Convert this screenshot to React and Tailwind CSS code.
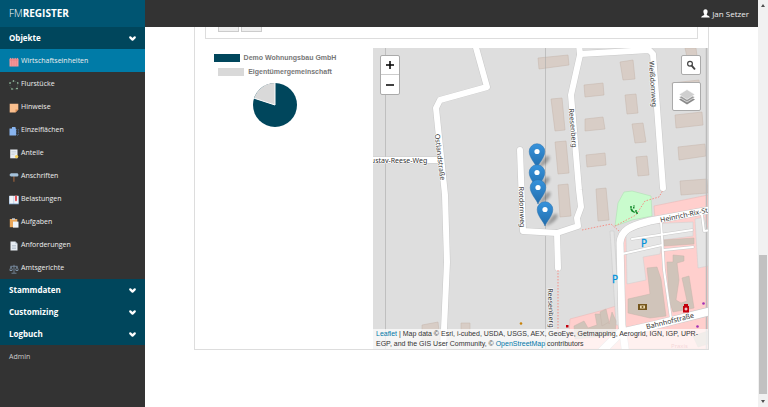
import { ChevronDown } from 'lucide-react';

const objects = [
  { label: 'Wirtschaftseinheiten', icon: FenceIcon, active: true },
  { label: 'Flurstücke', icon: ParcelIcon },
  { label: 'Hinweise', icon: NoteIcon },
  { label: 'Einzelflächen', icon: AreaIcon },
  { label: 'Anteile', icon: ShareIcon },
  { label: 'Anschriften', icon: SignIcon },
  { label: 'Belastungen', icon: BookIcon },
  { label: 'Aufgaben', icon: ClipboardIcon },
  { label: 'Anforderungen', icon: PageIcon },
  { label: 'Amtsgerichte', icon: ScaleIcon },
];

function Glyph({ children }) {
  return (
    <svg viewBox="0 0 10 10" className="w-[10px] h-[10px] shrink-0" aria-hidden="true">
      {children}
    </svg>
  );
}

function FenceIcon() {
  return (
    <Glyph>
      <path d="M.5 2 1.6.8 2.7 2 3.8.8 5 2 6.2.8 7.3 2 8.4.8 9.5 2V9.5H.5z" fill="#f3989b" />
      <path d="M2.7 1.5v8M5 1.5v8M7.3 1.5v8" stroke="#dd6a70" strokeWidth=".4" />
      <path d="M.5 3h9" stroke="#e8757c" strokeWidth=".6" />
    </Glyph>
  );
}

function ParcelIcon() {
  return (
    <Glyph>
      <path d="M1 3 4.5.8 9 2.7 8 8.8 3 9.3 1 6z" fill="none" stroke="#5f8b70" strokeWidth=".5" strokeDasharray="1 1" />
      <g fill="#a8d5b5">
        <circle cx="1" cy="3" r=".8" />
        <circle cx="4.5" cy="1" r=".8" />
        <circle cx="8.8" cy="3" r=".8" />
        <circle cx="8" cy="8.6" r=".8" />
        <circle cx="3" cy="9" r=".8" />
      </g>
    </Glyph>
  );
}

function NoteIcon() {
  return (
    <Glyph>
      <path d="M.7.8h8.6v5.8L6.5 9.4H.7z" fill="#fabf8e" />
      <path d="M9.3 6.6H6.5v2.8z" fill="#d98d55" />
    </Glyph>
  );
}

function AreaIcon() {
  return (
    <Glyph>
      <path d="M.5 2.5H3V1h3.5v1.5H7v7H.5z" fill="#88b4ef" />
      <path d="M7.4 3v6.2h2V3" fill="none" stroke="#5c80ad" strokeWidth=".7" strokeDasharray="1 .7" />
    </Glyph>
  );
}

function ShareIcon() {
  return (
    <Glyph>
      <path d="M1.2.5h7.3v8.8H1.2z" fill="#e8edf2" />
      <path d="M2.5 2.5h4.7M2.5 4h4.7M2.5 5.5h3" stroke="#b6c2cf" strokeWidth=".5" />
      <circle cx="7.6" cy="7.6" r="1.7" fill="#f4cf5a" />
    </Glyph>
  );
}

function SignIcon() {
  return (
    <Glyph>
      <path d="M4.2 3h1.4v6.7H4.2z" fill="#8a5a3b" />
      <path d="M.4 3 1.8 1.2h6.8L9.6 3 8.6 4.6H1.8z" fill="#a4c1da" />
    </Glyph>
  );
}

function BookIcon() {
  return (
    <Glyph>
      <path d="M0 1h9.8v8.3H0z" fill="#7ea4cf" />
      <path d="M.4.8h4.3v7.7H.4zM5.1.8h4.3v7.7H5.1z" fill="#f1f5fa" />
      <path d="M6 .8h2v5.8l-1-1-1 1z" fill="#e35157" />
    </Glyph>
  );
}

function ClipboardIcon() {
  return (
    <Glyph>
      <path d="M.8 1h7.5v8.2H.8z" fill="#e9a75b" />
      <path d="M3 .3h3v1.6H3z" fill="#c9ced4" />
      <path d="M4 3.6h5.5v6H4z" fill="#eef4fa" />
    </Glyph>
  );
}

function PageIcon() {
  return (
    <Glyph>
      <path d="M1.5.6h4.8l2.2 2.2v6.8h-7z" fill="#e6ecf2" />
      <path d="M6.3.6v2.2h2.2" fill="#b4c0cd" />
      <path d="M3 4.5h4M3 6h4M3 7.5h4" stroke="#9ba9b8" strokeWidth=".5" />
    </Glyph>
  );
}

function ScaleIcon() {
  return (
    <Glyph>
      <g fill="none" stroke="#7d93a8" strokeWidth=".8">
        <path d="M5 .8v8M2.5 9.2h5M1.5 2.3h7M2 2.5.8 6M2 2.5 3.4 6M8 2.5 6.6 6M8 2.5 9.3 6" />
      </g>
      <path d="M.4 6h3.2L2.9 7H1zM6.3 6h3.2l-.7 1H7z" fill="#7d93a8" />
    </Glyph>
  );
}

function Section({ label }) {
  return (
    <button className="w-full h-[22px] bg-[#00465c] flex items-center justify-between pl-[9px] pr-2 text-[8px] font-bold text-white">
      {label}
      <ChevronDown className="w-[9px] h-[9px]" strokeWidth={6} />
    </button>
  );
}

function Sidebar() {
  return (
    <nav className="w-[145px] shrink-0 bg-[#333333] text-[#eeeeee] text-[7px]">
      <a href="#" className="h-[27px] bg-[#005572] flex items-center pl-[9px] text-[10px] text-white">
        <span className="font-light">FM</span>
        <span className="font-bold">REGISTER</span>
      </a>
      <Section label="Objekte" />
      {objects.map(({ label, icon: Icon, active }) => (
        <a
          key={label}
          href="#"
          className={`h-[23px] flex items-center gap-[2px] pl-[9px] pt-[2px] ${active ? 'bg-[#007ba7]' : ''}`}
        >
          <Icon />
          {label}
        </a>
      ))}
      <Section label="Stammdaten" />
      <Section label="Customizing" />
      <Section label="Logbuch" />
      <a href="#" className="h-[23px] flex items-center pl-[9px] pt-[2px] text-[#cccccc]">Admin</a>
    </nav>
  );
}

function OwnerChart() {
  return (
    <div className="w-[168px] shrink-0 pt-[3px] pr-7 flex flex-col items-center text-[7px] leading-[14px] font-bold text-[#777777] font-['Liberation_Sans',sans-serif]">
      <div className="flex items-center gap-1">
        <span className="w-[26px] h-2 bg-[#00465c]" />
        Demo Wohnungsbau GmbH
      </div>
      <div className="flex items-center gap-1">
        <span className="w-[26px] h-2 bg-[#d9d9d9]" />
        Eigentümergemeinschaft
      </div>
      <svg viewBox="-22 -22 44 44" className="w-11 h-11 mt-1" role="img" aria-label="Anteile">
        <circle r="22" fill="#00465c" />
        <path d="M0 0V-22A22 22 0 0 0-20.9-6.8z" fill="#d9d9d9" />
        <path d="M0-22V0L-20.9-6.8" fill="none" stroke="#fff" />
      </svg>
    </div>
  );
}

const pins = [
  [537, 168],
  [537, 189],
  [538, 204],
  [545, 226],
];

const roads = [
  'M475 44 487 87 440 100 436 108 445 195 447 262 443 352',
  'M370 160H440',
  'M520 150 523 231 557 233 578 226 577 218 581 207 579 190 571 95 580 55 579 44',
  'M557 233 558 268',
  'M580 54 649 50 653 54 663 188',
];

const houses = [
  '538,58 568,55 569,65 539,69',
  '551,99 562,98 565,130 555,131',
  '555,142 566,141 569,173 558,174',
  '558,185 568,184 571,216 560,217',
  '584,85 603,83 604,95 585,97',
  '585,119 603,117 605,129 585,131',
  '586,155 605,153 606,165 587,167',
  '596,189 606,188 609,220 598,221',
  '620,62 633,60 635,79 623,80',
  '625,95 636,94 638,113 627,114',
  '632,124 643,123 646,142 635,143',
  '636,157 647,156 649,175 638,176',
  '685,48 696,48 697,56 687,57',
  '672,83 699,80 700,90 673,93',
  '675,115 702,112 703,125 676,128',
  '678,147 705,144 706,156 679,160',
  '680,181 707,179 708,193 681,195',
  '422,325 438,322 440,340 422,340',
  '461,323 470,323 470,335 461,335',
];

const townHouses = [
  '628,299 650,294 647,268 657,267 661,279 666,316 650,318 628,313',
  '667,262 673,262 673,255 684,256 684,261 677,263 679,280 676,300 681,303 687,301 682,278 689,276 694,308 673,312 669,300',
  '664,240 694,238 694,244 664,246',
  '574,326 584,321 588,328 597,325 595,314 605,314 609,324 612,312 616,321 615,335 575,339',
  '600,312 606,309 609,322 602,326',
  '693,336 708,331 708,344 698,347',
];

function Label({ x, y, turn, children }) {
  return (
    <text
      transform={`translate(${x} ${y}) rotate(${turn})`}
      className="text-[7px]"
      fill="#333"
      stroke="#fff"
      strokeWidth="1"
      paintOrder="stroke"
      textAnchor="middle"
      dominantBaseline="central"
    >
      {children}
    </text>
  );
}

function StreetMap() {
  return (
    <svg viewBox="373 48 335 301" preserveAspectRatio="xMidYMid slice" className="w-full h-full font-['Noto_Sans',sans-serif]">
      <defs>
        <linearGradient id="pin" x1="0" y1="0" x2="0" y2="1">
          <stop offset="0" stopColor="#3793dc" />
          <stop offset="1" stopColor="#226dac" />
        </linearGradient>
        <filter id="soft" x="-50%" y="-50%" width="200%" height="200%">
          <feGaussianBlur stdDeviation="1.5" />
        </filter>
      </defs>
      <rect x="373" y="48" width="335" height="301" fill="#dedede" />

      {/* town centre */}
      <path d="M654 206 708 195V349H568L570 319 600 311 616 306 623 236 655 218z" fill="#ffcfcd" stroke="#e8b4b2" strokeWidth=".5" />
      <path d="M626 234 646 224 693 222V236L662 240 660 254 643 257 646 280 627 284z" fill="#e5e5e5" stroke="#cfcfcf" strokeWidth=".5" />
      <path d="M695 219 704 217 708 230V266L698 268z" fill="#e5e5e5" stroke="#cfcfcf" strokeWidth=".5" />
      <path d="M610 231H614L620 325H616z" fill="#e5e5e5" stroke="#c8c8c8" strokeWidth=".5" />
      <path d="M624 192 632 191 651 196 652 216 632 220 615 226 618 203z" fill="#c9fbcd" stroke="#a8dcad" strokeWidth=".5" />

      <g stroke="#c4b5ab" strokeWidth=".5">
        {houses.map((points) => <polygon key={points} points={points} fill="#d8cdc6" />)}
        {townHouses.map((points) => <polygon key={points} points={points} fill="#d0c4ba" />)}
      </g>

      <path d="M385.500 48V349M545.500 48V349" stroke="#aaa" strokeWidth=".6" />
      <path d="M706.500 48V349" stroke="#bbb" strokeWidth="1.500" />

      <g fill="none" stroke="#c9c9c9" strokeLinecap="round" strokeLinejoin="round">
        {roads.map((d) => <path key={d} d={d} strokeWidth="7" />)}
        <path d="M715 209 650 221C630 226 621 230 620 243L622 325 626 355" strokeWidth="8" />
        <path d="M715 310 655 325 620 333 598 355" strokeWidth="9" />
        <path d="M661 221 664 270 671 319M622 254 662 245M632 239 692 230M664 250 693 247M702 215 704 231 712 230" strokeWidth="3" />
      </g>
      <g fill="none" stroke="#fff" strokeLinecap="round" strokeLinejoin="round">
        {roads.map((d) => <path key={d} d={d} strokeWidth="6" />)}
        <path d="M661 221 664 270 671 319M622 254 662 245M632 239 692 230M664 250 693 247M702 215 704 231 712 230" strokeWidth="2" />
        <path d="M715 209 650 221C630 226 621 230 620 243L622 325 626 355" strokeWidth="7" />
        <path d="M715 310 655 325 620 333 598 355" strokeWidth="8" />
      </g>

      <g fill="none" stroke="#f58f86" strokeWidth="1" strokeDasharray="1.500 1.500">
        <path d="M558 270V332M582 230 611 224 619 231M615 226 636 215 645 201 659 197 663 190" />
      </g>

      <Label x={399} y={160} turn={0}>ustav-Reese-Weg</Label>
      <Label x={440} y={157} turn={83}>Ostlandstraße</Label>
      <Label x={573} y={128} turn={85}>Reesenberg</Label>
      <Label x={653} y={84} turn={86}>Weißdornweg</Label>
      <Label x={522} y={207} turn={88}>Rotdornweg</Label>
      <Label x={551} y={308} turn={88}>Reesenberg</Label>
      <Label x={684} y={215} turn={-12}>Heinrich-Rix-St</Label>
      <Label x={670} y={321} turn={-14}>Bahnhofstraße</Label>
      <text x="671" y="348" className="text-[6px]" fill="#d9777c">Praxis</text>

      <g className="text-[10px]" fill="#0092da" stroke="#0092da" strokeWidth=".3">
        <text x="641" y="247">P</text>
        <text x="612" y="283">P</text>
      </g>

      {/* playground */}
      <g fill="#158a2b">
        <circle cx="631" cy="207" r="1" />
        <circle cx="636" cy="211" r="1" />
        <circle cx="634" cy="206" r=".8" />
        <path d="M630 208.500h2l1 2 2 1.500-.5 1-3-1.500zM635.500 212h2l.5 2h-1.500zM633 207h1.500v1.500H633z" />
      </g>
      <path d="M638 304h9v6h-9z" fill="#76561d" />
      <path d="M640 305.500h5v3h-5z" fill="#ead9b0" />
      <circle cx="642.500" cy="307" r="1" fill="#76561d" />
      <path d="M684 304h4v2h1v6.500h-6V306h1z" fill="#c4000d" />
      <path d="M684.500 309h3M686 307.500v3" stroke="#fff" />
      <circle cx="703.500" cy="303.500" r="1.300" fill="#a32fb3" />
      <circle cx="697.500" cy="326.500" r="1.300" fill="#a32fb3" />
      <circle cx="521" cy="323.500" r="1.300" fill="#c7820a" />
      <path d="M566 325h2.500v2.500H566z" fill="#c4000d" />

      {pins.map(([x, y]) => (
        <g key={y} transform={`translate(${x} ${y})`}>
          <path d="M0 0 7-10C11-14 14-12 12-8S4-1 0 0z" fill="#000" opacity=".3" filter="url(#soft)" />
          <path d="M0 0C-1-4-7.800-10-7.800-16.500A7.800 7.800 0 0 1 7.800-16.500C7.800-10 1-4 0 0z" fill="url(#pin)" stroke="#2a70ad" strokeWidth=".5" />
          <circle cy="-16.500" r="2.600" fill="#fff" />
        </g>
      ))}
    </svg>
  );
}

function SearchIcon() {
  return (
    <svg viewBox="0 0 10 10" className="w-[10px] h-[10px]" aria-hidden="true">
      <circle cx="4" cy="3.700" r="2.400" fill="none" stroke="#444" strokeWidth="1.200" />
      <path d="M5.700 5.700 8.500 8.800" stroke="#444" strokeWidth="1.900" strokeLinecap="round" />
    </svg>
  );
}

function LayersIcon() {
  return (
    <svg viewBox="0 0 18 18" className="w-[18px] h-[18px]" aria-hidden="true">
      <path d="M9 7 17 11.500 9 16.500 1 11.500z" fill="#8a8a8a" />
      <path d="M9 4.500 17 9.200 9 14 1 9.200z" fill="#9a9a9a" stroke="#fff" strokeWidth=".6" />
      <path d="M9 1.500 17 6.500 9 11.500 1 6.500z" fill="#cfcfcf" stroke="#fff" strokeWidth=".6" />
    </svg>
  );
}

function MapPanel() {
  return (
    <div className="relative flex-1 h-[301px] overflow-hidden font-['Liberation_Sans',sans-serif]">
      <StreetMap />
      <div className="absolute top-[7px] left-[7px] w-5 flex flex-col bg-white border border-[#aaaaaa] rounded-xs text-black">
        <button className="h-[19px] flex items-center justify-center border-b border-[#cccccc]" aria-label="Vergrößern">
          <svg viewBox="0 0 8 8" className="w-2 h-2"><path d="M4 0v8M0 4h8" stroke="#000" strokeWidth="1.500" /></svg>
        </button>
        <button className="h-[19px] flex items-center justify-center" aria-label="Verkleinern">
          <svg viewBox="0 0 8 8" className="w-2 h-2"><path d="M0 4h8" stroke="#000" strokeWidth="1.500" /></svg>
        </button>
      </div>
      <div className="absolute top-[7px] right-[7px] flex flex-col items-end gap-[7px]">
        <button className="w-5 h-5 bg-white border border-[#aaaaaa] rounded-xs flex items-center justify-center" aria-label="Suchen">
          <SearchIcon />
        </button>
        <button className="w-[29px] h-[29px] bg-white border border-[#aaaaaa] rounded-xs flex items-center justify-center" aria-label="Ebenen">
          <LayersIcon />
        </button>
      </div>
      <div className="absolute bottom-0 inset-x-0 bg-white/70 px-[3px] text-[7px] leading-[10px] text-[#333333]">
        <a href="#" className="text-[#0078a8]">Leaflet</a> | Map data © Esri, i-cubed, USDA, USGS, AEX, GeoEye, Getmapping, Aerogrid, IGN, IGP, UPR-EGP, and the GIS User Community, © <a href="#" className="text-[#0078a8]">OpenStreetMap</a> contributors
      </div>
    </div>
  );
}

function Scrollbar() {
  return (
    <div className="w-[10px] shrink-0 bg-[#f1f1f1] flex flex-col items-center justify-between py-1">
      <svg viewBox="0 0 4 3" className="w-1 h-[3px]"><path d="M0 3 2 0 4 3z" fill="#505050" /></svg>
      <div className="flex-1" />
      <div className="w-2 h-[139px] bg-[#c1c1c1] mb-[6px]" />
      <svg viewBox="0 0 4 3" className="w-1 h-[3px]"><path d="M0 0 2 3 4 0z" fill="#505050" /></svg>
    </div>
  );
}

export default function App() {
  return (
    <div className="min-h-screen flex bg-white font-['Open_Sans',sans-serif]">
      <Sidebar />
      <div className="flex-1 min-w-0 flex flex-col">
        <header className="h-[27px] bg-[#333333] flex items-center justify-end pr-[9px] text-[8px] text-[#eeeeee]">
          <a href="#" className="flex items-center gap-[2px]">
            <svg viewBox="0 0 9 9" className="w-[9px] h-[9px]" aria-hidden="true">
              <path d="M4.500.2C6 .2 6.800 1.300 6.600 3 6.500 4.200 5.800 5 5.700 5.600 5.800 6.700 8.700 6.800 8.800 8.600H.2C.3 6.800 3.200 6.700 3.300 5.600 3.200 5 2.500 4.200 2.400 3 2.200 1.300 3 .2 4.500.2z" fill="#fff" />
            </svg>
            Jan Setzer
          </a>
        </header>
        <main className="ml-[49px] mr-[49px] border border-t-0 border-[#dddddd]">
          <div className="h-3 mx-[10px] mb-[9px] border border-t-0 border-[#dddddd] flex gap-[2px] pl-3">
            <button className="w-[21px] h-[5px] bg-[#eeeeee] border border-t-0 border-[#cccccc]" aria-label="Zurück" />
            <button className="w-[21px] h-[5px] bg-[#eeeeee] border border-t-0 border-[#cccccc]" aria-label="Weiter" />
          </div>
          <div className="flex pl-[10px]">
            <OwnerChart />
            <MapPanel />
          </div>
        </main>
      </div>
      <Scrollbar />
    </div>
  );
}
